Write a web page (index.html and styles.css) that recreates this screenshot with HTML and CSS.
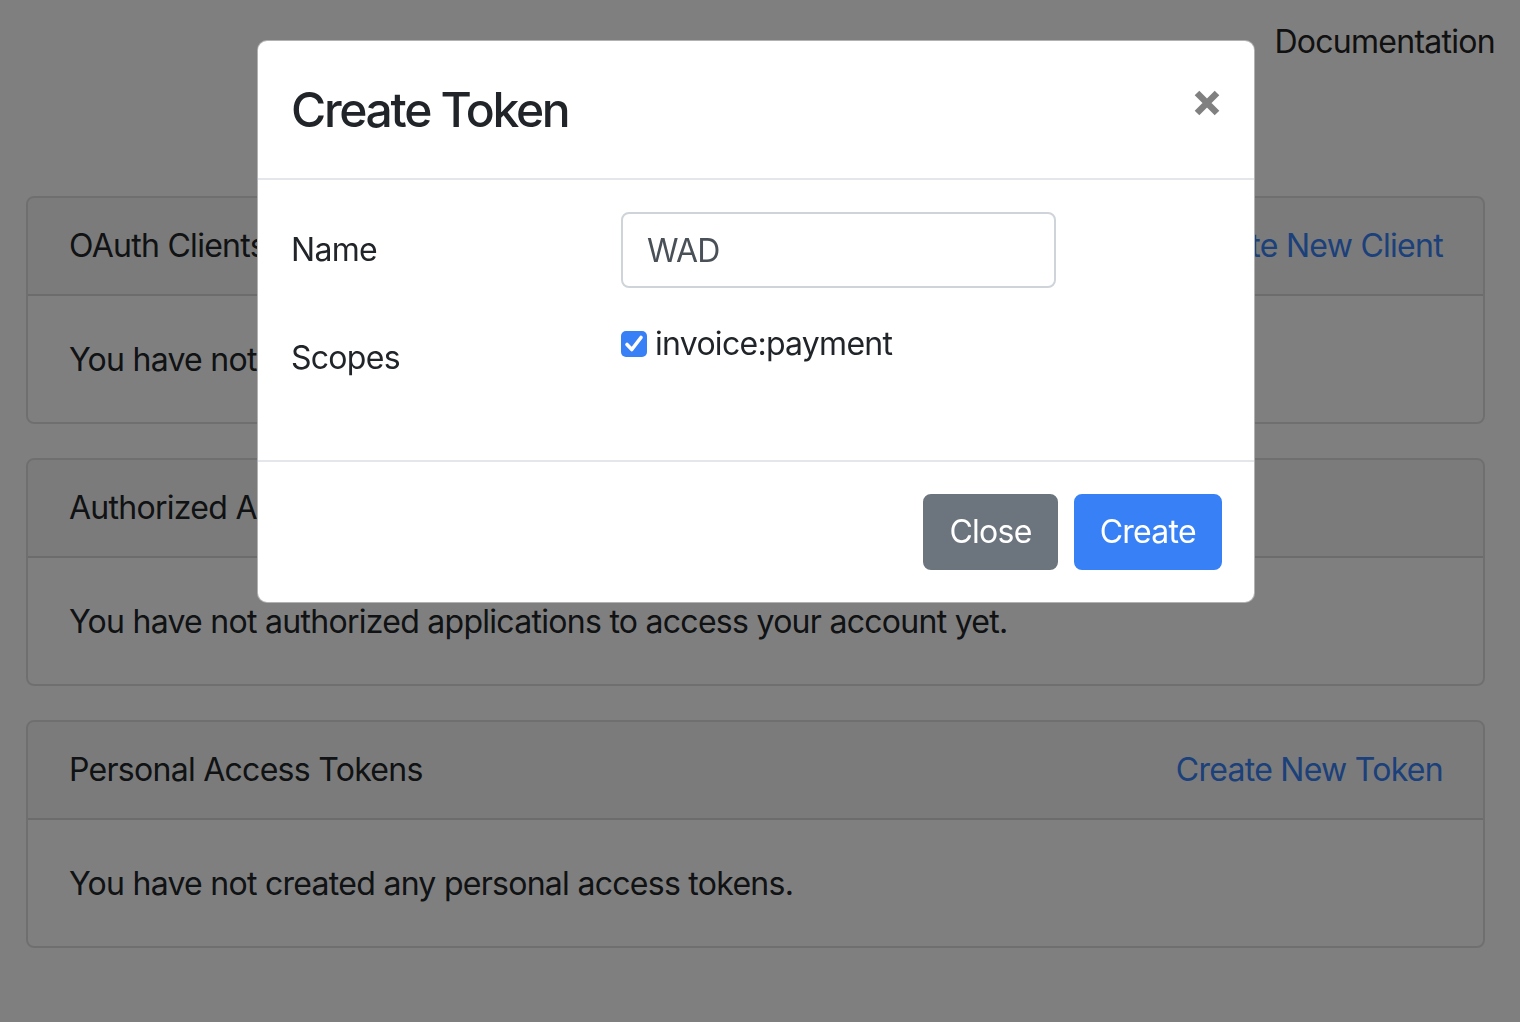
FILE: index.html
```html
<!DOCTYPE html>
<html lang="en">
<head>
<meta charset="utf-8">
<title>Create Token</title>
<link rel="stylesheet" href="styles.css">
</head>
<body>
<nav class="topnav">
  <a class="nav-link" href="#">Documentation</a>
</nav>
<main class="container">
  <section class="card">
    <div class="card-header">
      <span>OAuth Clients</span>
      <a class="action" href="#">Create New Client</a>
    </div>
    <div class="card-body">You have not created any OAuth clients.</div>
  </section>
  <section class="card">
    <div class="card-header">
      <span>Authorized Applications</span>
    </div>
    <div class="card-body">You have not authorized applications to access your account yet.</div>
  </section>
  <section class="card">
    <div class="card-header">
      <span>Personal Access Tokens</span>
      <a class="action" href="#">Create New Token</a>
    </div>
    <div class="card-body">You have not created any personal access tokens.</div>
  </section>
</main>

<div class="backdrop"></div>
<div class="modal">
  <div class="modal-header">
    <h4 class="modal-title">Create Token</h4>
    <button class="close" type="button" aria-label="Close">
      <svg width="26" height="26" viewBox="0 0 26 26"><path d="M3 3 L23 23 M23 3 L3 23" stroke="#808080" stroke-width="6.5" stroke-linecap="butt"/></svg>
    </button>
  </div>
  <div class="modal-body">
    <div class="form-row">
      <label class="col-label">Name</label>
      <div class="field"><input class="form-control" type="text" value="WAD"></div>
    </div>
    <div class="form-row">
      <label class="col-label">Scopes</label>
      <div class="field">
        <label class="checkbox">
          <span class="check-box">
            <svg width="26" height="26" viewBox="0 0 26 26"><rect x="0" y="0" width="26" height="26" rx="5" fill="#3880f5"/><path d="M6 13.5 L10.8 18.5 L20 6.5" fill="none" stroke="#fff" stroke-width="3.6" stroke-linecap="round" stroke-linejoin="round"/></svg>
          </span>
          <span>invoice:payment</span>
        </label>
      </div>
    </div>
  </div>
  <div class="modal-footer">
    <button class="btn btn-secondary" type="button">Close</button>
    <button class="btn btn-primary" type="button">Create</button>
  </div>
</div>
</body>
</html>
```

FILE: styles.css
```css
* { box-sizing: border-box; }
html, body { margin: 0; padding: 0; }
body {
  width: 1520px;
  height: 1022px;
  overflow: hidden;
  background: #ffffff;
  font-family: Inter, "Open Sans", "Liberation Sans", sans-serif;
  font-size: 32px;
  line-height: 48px;
  letter-spacing: -0.72px;
  color: #212529;
}
.topnav {
  display: flex;
  justify-content: flex-end;
  padding: 18px 25px 0 0;
  height: 196px;
}
.nav-link {
  color: #222;
  text-decoration: none;
}
.container {
  margin-left: 26px;
  width: 1459px;
}
.card {
  border: 2px solid rgba(0,0,0,.125);
  border-radius: 8px;
  margin-bottom: 34px;
  overflow: hidden;
}
.card-header {
  display: flex;
  justify-content: space-between;
  padding: 24px 40px 24px 41px;
  background: rgba(0,0,0,.03);
  border-bottom: 2px solid rgba(0,0,0,.125);
}
.action {
  color: #3880f5;
  text-decoration: none;
}
.card-body {
  padding: 40px 40px 38px 41px;
}
.backdrop {
  position: fixed;
  inset: 0;
  background: rgba(0,0,0,.5);
}
.modal {
  position: absolute;
  left: 257px;
  top: 40px;
  width: 998px;
  background: #fff;
  border: 1px solid rgba(0,0,0,.3);
  border-radius: 10px;
  overflow: hidden;
}
.modal-header {
  display: flex;
  justify-content: space-between;
  align-items: flex-start;
  padding: 33px 32px 32px 33px;
  border-bottom: 2px solid #e4e7ea;
}
.modal-title {
  margin: 0;
  font-size: 48px;
  line-height: 72px;
  font-weight: 500;
  letter-spacing: -2.3px;
  color: #212529;
}
.close {
  border: 0;
  background: transparent;
  padding: 0;
  margin: 16px 2px 0 0;
  width: 26px;
  height: 26px;
  line-height: 0;
}
.modal-body {
  padding: 32px 32px 32px 33px;
}
.form-row {
  display: grid;
  grid-template-columns: 330px 435px;
  margin-bottom: 32px;
}
.col-label {
  padding: 14px 0;
}
.form-control {
  display: block;
  width: 435px;
  height: 76px;
  padding: 12px 24px;
  font-family: inherit;
  font-size: 32px;
  line-height: 48px;
  letter-spacing: -0.72px;
  color: #495057;
  background: #fff;
  border: 2px solid #ced4da;
  border-radius: 8px;
  outline: none;
}
.checkbox {
  display: flex;
  align-items: center;
  gap: 8px;
}
.check-box {
  display: block;
  width: 26px;
  height: 26px;
  line-height: 0;
}
.modal-footer {
  display: flex;
  justify-content: flex-end;
  gap: 16px;
  padding: 32px;
  border-top: 2px solid #e4e7ea;
}
.btn {
  height: 76px;
  padding: 12px 24px;
  font-family: inherit;
  font-size: 32px;
  line-height: 48px;
  letter-spacing: -0.72px;
  border: 2px solid transparent;
  border-radius: 8px;
  color: #fff;
}
.btn-secondary {
  background: #6c757d;
  border-color: #6c757d;
}
.btn-primary {
  background: #3880f5;
  border-color: #3880f5;
}
```
